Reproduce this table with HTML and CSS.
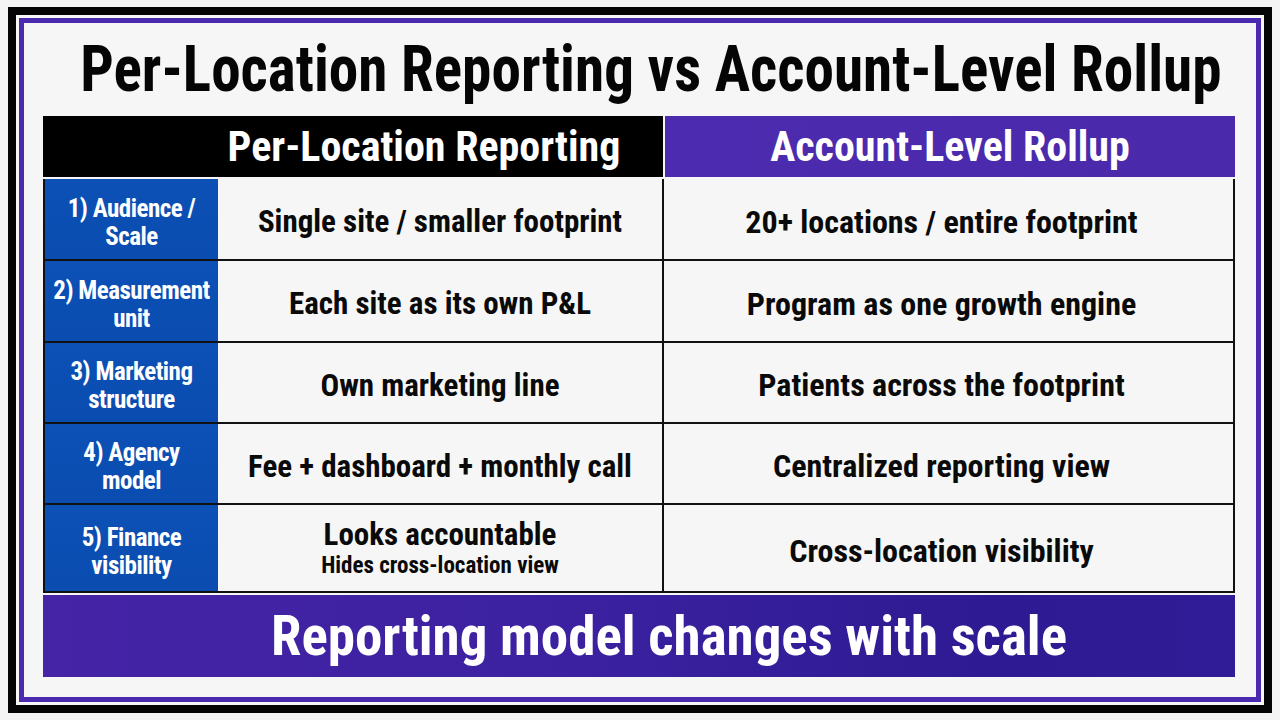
FILE: index.html
```html
<!DOCTYPE html>
<html lang="en">
<head>
<meta charset="utf-8">
<title>Per-Location Reporting vs Account-Level Rollup</title>
<link rel="stylesheet" href="styles.css">
</head>
<body>
<div class="page">
  <div class="frame">
    <div class="inner">
      <h1 class="title"><span class="title-text">Per-Location Reporting vs Account-Level Rollup</span></h1>
      <div class="table">
        <div class="head">
          <div class="head-left">Per-Location Reporting</div>
          <div class="head-right">Account-Level Rollup</div>
        </div>
        <div class="body">
          <div class="row r1">
            <div class="label">1) Audience /<br>Scale</div>
            <div class="cell">Single site / smaller footprint</div>
            <div class="cell right">20+ locations / entire footprint</div>
          </div>
          <div class="row r2">
            <div class="label">2) Measurement<br>unit</div>
            <div class="cell">Each site as its own P&amp;L</div>
            <div class="cell right">Program as one growth engine</div>
          </div>
          <div class="row r3">
            <div class="label">3) Marketing<br>structure</div>
            <div class="cell">Own marketing line</div>
            <div class="cell right">Patients across the footprint</div>
          </div>
          <div class="row r4">
            <div class="label">4) Agency<br>model</div>
            <div class="cell">Fee + dashboard + monthly call</div>
            <div class="cell right">Centralized reporting view</div>
          </div>
          <div class="row r5">
            <div class="label">5) Finance<br>visibility</div>
            <div class="cell stack"><span class="main">Looks accountable</span><span class="sub">Hides cross-location view</span></div>
            <div class="cell right">Cross-location visibility</div>
          </div>
        </div>
        <div class="footer">Reporting model changes with scale</div>
      </div>
    </div>
  </div>
</div>
</body>
</html>
```

FILE: styles.css
```css
* { box-sizing: border-box; }
html, body { margin: 0; padding: 0; }
body {
  background: #f4f4f4;
  font-family: "Roboto Condensed", "Liberation Sans Narrow", "DejaVu Sans Condensed", Roboto, sans-serif;
  font-stretch: condensed;
  font-weight: 700;
  width: 1280px;
  height: 720px;
  overflow: hidden;
}
.page {
  padding: 7px 8px 7px 8px;
}
.frame {
  width: 1264px;
  height: 706px;
  border: 8px solid #050505;
  padding: 3px;
  background: #f7f7f7;
}
.inner {
  height: 100%;
  border: 5px solid #4a2bb0;
  background: #f6f6f6;
  padding: 0 22px 0 19px;
}
.title {
  display: flex;
  justify-content: center;
  margin: 15px 0 14px 0;
  padding-left: 24px;
  font-size: 64px;
  line-height: 64px;
  font-weight: 700;
  color: #050505;
  white-space: nowrap;
}
.title-text {
  display: inline-block;
  flex: none;
  transform: scaleX(0.925);
  transform-origin: 50% 50%;
}
.table {
  width: 1192px;
}
.head {
  display: flex;
  height: 61px;
  gap: 2px;
  margin-bottom: 2px;
}
.head-left, .head-right {
  display: flex;
  align-items: center;
  justify-content: center;
  color: #fff;
  font-size: 42px;
  white-space: nowrap;
}
.head-left {
  width: 620px;
  background: #000;
  padding-left: 142px;
}
.head-right {
  width: 570px;
  background: linear-gradient(90deg, #4d2bb0, #4a29aa);
}
.body {
  border-left: 2px solid #111;
  border-right: 2px solid #111;
}
.row {
  display: grid;
  grid-template-columns: 173px 444px 571px;
  border-bottom: 2px solid #111;
  background: #f6f6f6;
}
.r1, .r2 { height: 82px; }
.r3, .r4 { height: 81px; }
.r5 { height: 88px; }
.label {
  display: flex;
  align-items: center;
  justify-content: center;
  text-align: center;
  background: linear-gradient(180deg, #0d51b6, #0a4cb0);
  color: #fff;
  font-size: 25px;
  letter-spacing: -0.5px;
  line-height: 28px;
  padding-top: 7px;
}
.cell {
  display: flex;
  align-items: center;
  justify-content: center;
  text-align: center;
  color: #0a0a0a;
  font-size: 31px;
  white-space: nowrap;
  padding-top: 5px;
}
.cell.right {
  border-left: 2px solid #111;
  font-size: 32px;
  padding-right: 14px;
}
.stack {
  flex-direction: column;
  padding-top: 2px;
}
.stack .main {
  line-height: 34px;
}
.stack .sub {
  font-size: 23px;
  line-height: 28px;
}
.footer {
  margin-top: 2px;
  height: 82px;
  display: flex;
  align-items: center;
  justify-content: center;
  color: #fff;
  font-size: 55px;
  white-space: nowrap;
  padding-left: 60px;
  background: linear-gradient(90deg, #4524a6 0%, #3b21a0 45%, #2e1a92 80%, #301c96 100%);
}
```
